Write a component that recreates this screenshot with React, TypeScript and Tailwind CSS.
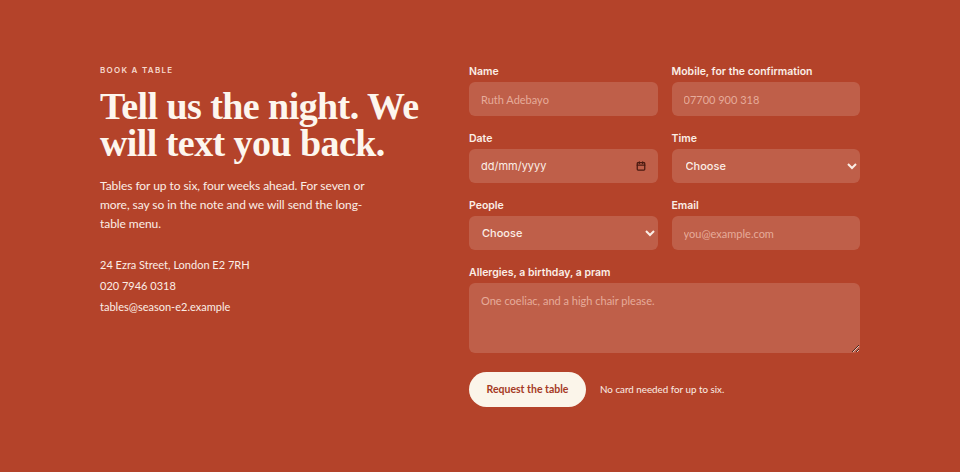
import { Calendar } from 'lucide-react';

const field =
    'w-full h-[34px] rounded-md bg-white/15 px-3 text-[11px] text-[#fbeee6] placeholder:text-[#e6ab9a] outline-none';

const body = { fontFamily: 'Lato, "Noto Sans", sans-serif' };
const ui = { fontFamily: 'Inter, "Noto Sans", sans-serif' };

function Label({ children }: { children: React.ReactNode }) {
    return (
        <span className="block mb-[4px] text-[10.5px] leading-[12px] font-semibold text-[#fbeee6]" style={ui}>
            {children}
        </span>
    );
}

export default function App() {
    return (
        <section className="min-h-[472px] w-full bg-[#b4432a] text-[#fbeee6]" style={body}>
            <div className="mx-auto grid w-[760px] grid-cols-[340px_391px] justify-between pt-[64px]">
                {/* Left: intro and contact */}
                <div>
                    <p className="text-[8px] font-semibold uppercase tracking-[0.16em] text-[#f6d9cd]" style={ui}>
                        Book a table
                    </p>
                    <h2
                        className="mt-[12px] text-[38px] font-bold leading-[37px] tracking-[-0.015em] text-[#fdf6ee]"
                        style={{ fontFamily: '"Liberation Serif", "DejaVu Serif", serif' }}
                    >
                        Tell us the night. We will text you back.
                    </h2>
                    <p className="mt-[14px] w-[272px] text-[12px] leading-[19px] tracking-[-0.005em] text-[#fbeee6]">
                        Tables for up to six, four weeks ahead. For seven or more, say so in the note and we will send the long-table menu.
                    </p>
                    <ul className="mt-[24px] space-y-[5px] text-[11px] leading-[16px]">
                        <li>24 Ezra Street, London E2 7RH</li>
                        <li>020 7946 0318</li>
                        <li>tables@season-e2.example</li>
                    </ul>
                </div>

                {/* Right: booking form */}
                <form className="mt-[2px] grid grid-cols-2 gap-x-[14px] gap-y-[17px]">
                    <label>
                        <Label>Name</Label>
                        <input className={field} placeholder="Ruth Adebayo" />
                    </label>
                    <label>
                        <Label>Mobile, for the confirmation</Label>
                        <input className={field} placeholder="07700 900 318" />
                    </label>
                    <label>
                        <Label>Date</Label>
                        <div className="relative">
                            <input className={`${field} text-[10.5px]`} style={ui} defaultValue="dd/mm/yyyy" readOnly />
                            <Calendar className="absolute right-[12px] top-[12px] h-[10px] w-[10px] text-[#4a1a10]" strokeWidth={3} />
                        </div>
                    </label>
                    <label>
                        <Label>Time</Label>
                        <select className={`${field} pl-[10px] text-[10.5px] font-medium`} style={ui} defaultValue="">
                            <option value="">Choose</option>
                            <option>18:00</option>
                            <option>19:30</option>
                            <option>21:00</option>
                        </select>
                    </label>
                    <label>
                        <Label>People</Label>
                        <select className={`${field} pl-[9px] text-[10.5px] font-medium`} style={ui} defaultValue="">
                            <option value="">Choose</option>
                            <option>2</option>
                            <option>4</option>
                            <option>6</option>
                        </select>
                    </label>
                    <label>
                        <Label>Email</Label>
                        <input className={field} placeholder="you@example.com" />
                    </label>
                    <label className="col-span-2">
                        <Label>Allergies, a birthday, a pram</Label>
                        <textarea
                            className="block h-[70px] w-full rounded-md bg-white/15 px-3 py-[10px] text-[11px] text-[#fbeee6] placeholder:text-[#e6ab9a] outline-none"
                            placeholder="One coeliac, and a high chair please."
                        />
                    </label>
                    <div className="col-span-2 mt-[2px] flex items-center gap-[14px]">
                        <button
                            type="button"
                            className="h-[35px] w-[117px] rounded-full bg-[#fbf5ea] text-[10.5px] font-bold text-[#a53a24]"
                        >
                            Request the table
                        </button>
                        <span className="text-[9.8px] text-[#fbeee6]">No card needed for up to six.</span>
                    </div>
                </form>
            </div>
        </section>
    );
}
